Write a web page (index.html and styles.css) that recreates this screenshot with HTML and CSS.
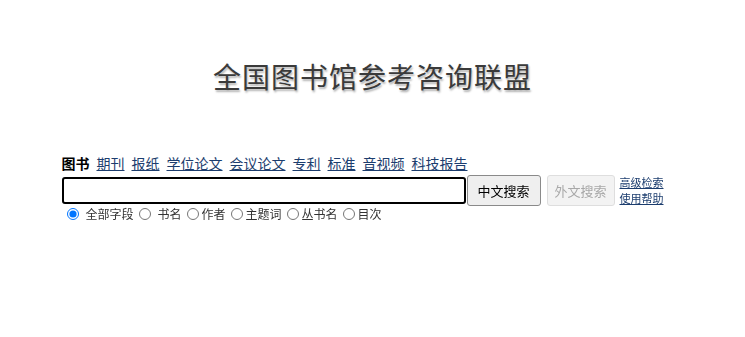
FILE: index.html
```html
<!DOCTYPE html>
<html lang="zh-CN">
<head>
  <meta charset="UTF-8" />
  <title>全国图书馆参考咨询联盟</title>
  <link rel="stylesheet" href="styles.css">
</head>
<body>

  <div class="logo">全国图书馆参考咨询联盟</div>

  <div class="search">
    <nav class="tabs">
      <span class="cur">图书</span>
      <a href="#">期刊</a>
      <a href="#">报纸</a>
      <a href="#">学位论文</a>
      <a href="#">会议论文</a>
      <a href="#">专利</a>
      <a href="#">标准</a>
      <a href="#">音视频</a>
      <a href="#">科技报告</a>
    </nav>

    <form class="bar">
      <input type="text" class="kw" autofocus>
      <button type="button" class="btn">中文搜索</button>
      <button type="button" class="btn" disabled>外文搜索</button>
      <div class="more">
        <a href="#">高级检索</a>
        <a href="#">使用帮助</a>
      </div>
    </form>

    <div class="fields">
      <label class="sp"><input type="radio" name="f" checked>全部字段</label>
      <label class="sp"><input type="radio" name="f">书名</label>
      <label><input type="radio" name="f">作者</label>
      <label><input type="radio" name="f">主题词</label>
      <label><input type="radio" name="f">丛书名</label>
      <label><input type="radio" name="f">目次</label>
    </div>
  </div>

</body>
</html>
```

FILE: styles.css
```css
* {
  margin: 0;
  padding: 0;
  box-sizing: border-box;
}
body {
  font-family: "Noto Sans CJK SC", "Noto Sans", sans-serif;
  background: #fff;
  color: #000;
}
.logo {
  padding-top: 56px;
  text-align: center;
  font-size: 28px;
  line-height: 40px;
  letter-spacing: 1px;
  color: #3a3a3a;
  text-shadow: 1px 2px 2px rgba(0, 0, 0, 0.3);
}
.search {
  width: 622px;
  margin: 0 auto;
  padding-top: 59px;
}
.tabs {
  display: flex;
  gap: 7px;
  font-size: 14px;
  line-height: 17px;
}
.tabs .cur {
  font-weight: bold;
}
.tabs a {
  color: #1c3d6e;
  text-decoration: underline;
}
.bar {
  display: flex;
  align-items: center;
  margin-top: 2px;
}
.kw {
  width: 404px;
  height: 27px;
  border: 2px solid #000;
  border-radius: 3px;
  outline: none;
  padding: 0 2px;
  font-size: 14px;
}
.btn {
  height: 31px;
  width: 74px;
  margin-left: 1px;
  font-family: inherit;
  font-size: 13px;
  color: #000;
  background: #efefef;
  border: 1px solid #8a8a8a;
  border-radius: 3px;
}
.btn + .btn {
  width: 68px;
  margin-left: 6px;
}
.btn:disabled {
  color: #a8a8a8;
  background: #f3f3f3;
  border-color: #dedede;
}
.more {
  display: flex;
  flex-direction: column;
  margin-left: 5px;
  font-size: 11px;
  line-height: 16px;
}
.more a {
  color: #1c3d6e;
}
.fields {
  display: flex;
  font-size: 12px;
  line-height: 15px;
  color: #333;
}
.fields label {
  display: flex;
  align-items: center;
}
.fields input {
  width: 12px;
  height: 12px;
  margin: 0 3px 0 5px;
}
.fields .sp input {
  margin-right: 7px;
}
```
